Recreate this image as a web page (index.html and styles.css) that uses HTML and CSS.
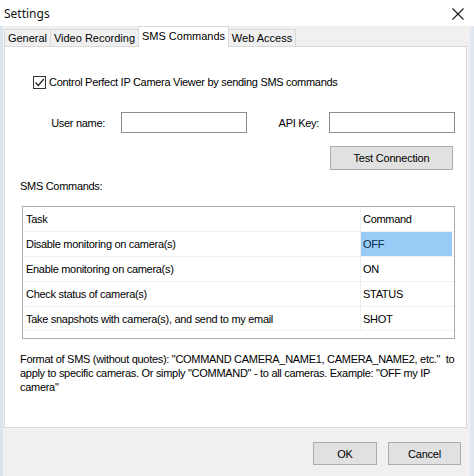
FILE: index.html
```html
<!DOCTYPE html>
<html>
<head>
<meta charset="utf-8">
<link rel="stylesheet" href="styles.css">
</head>
<body>
<div class="window">
  <div class="titlebar">
    <span class="title">Settings</span>
    <svg class="close" width="12" height="12" viewBox="0 0 12 12"><path d="M0.5 0.5 L11.5 11.5 M11.5 0.5 L0.5 11.5" stroke="#1a1a1a" stroke-width="1.1" fill="none"/></svg>
  </div>
  <div class="client">
    <div class="tabs">
      <div class="tab t-general">General</div>
      <div class="tab t-video">Video Recording</div>
      <div class="tab t-sms active">SMS Commands</div>
      <div class="tab t-web">Web Access</div>
    </div>
    <div class="panel">
      <div class="check-row">
        <span class="checkbox"><svg width="11" height="11" viewBox="0 0 11 11"><path d="M1.5 5.5 L4.3 8.5 L9.8 2" stroke="#222" stroke-width="1.2" fill="none"/></svg></span>
        <span class="check-label">Control Perfect IP Camera Viewer by sending SMS commands</span>
      </div>
      <div class="fields">
        <span class="lbl lbl-user">User name:</span>
        <span class="input"></span>
        <span class="lbl lbl-api">API Key:</span>
        <span class="input"></span>
      </div>
      <div class="test-row">
        <button class="btn btn-test">Test Connection</button>
      </div>
      <div class="section-label">SMS Commands:</div>
      <div class="grid">
        <div class="grow head"><div class="c-task">Task</div><div class="c-cmd">Command</div></div>
        <div class="grow"><div class="c-task">Disable monitoring on camera(s)</div><div class="c-cmd"><span class="sel">OFF</span></div></div>
        <div class="grow"><div class="c-task">Enable monitoring on camera(s)</div><div class="c-cmd">ON</div></div>
        <div class="grow"><div class="c-task">Check status of camera(s)</div><div class="c-cmd">STATUS</div></div>
        <div class="grow"><div class="c-task">Take snapshots with camera(s), and send to my email</div><div class="c-cmd">SHOT</div></div>
      </div>
      <p class="note">Format of SMS (without quotes): "COMMAND CAMERA_NAME1, CAMERA_NAME2, etc."&nbsp; to apply to specific cameras. Or simply "COMMAND" - to all cameras. Example: "OFF my IP camera"</p>
    </div>
    <div class="footer">
      <button class="btn btn-ok">OK</button>
      <button class="btn btn-cancel">Cancel</button>
    </div>
  </div>
</div>
</body>
</html>
```
FILE: styles.css
```css
* { box-sizing: border-box; }
html, body { margin: 0; padding: 0; }
body {
  width: 474px;
  height: 476px;
  overflow: hidden;
  font-family: "Liberation Sans", Arial, sans-serif;
  font-size: 11px;
  letter-spacing: -0.3px;
  color: #000;
  background: #f0f0f0;
}
.window {
  width: 474px;
  height: 476px;
  display: flex;
  flex-direction: column;
}
.titlebar {
  height: 26px;
  background: #fff;
  display: flex;
  align-items: center;
  justify-content: space-between;
  padding: 0 10px 0 4px;
}
.title {
  font-family: "Noto Sans", "Open Sans", sans-serif;
  font-size: 12px;
  letter-spacing: 0;
  color: #111;
}
.close { margin-top: 1px; }
.client {
  flex: 1;
  display: flex;
  flex-direction: column;
  background: #f0f0f0;
  border-left: 3px solid #dbe4ed;
  border-right: 4px solid #e1e8ef;
}
.tabs {
  height: 20px;
  display: flex;
  align-items: flex-end;
  padding-left: 1px;
}
.tab {
  height: 17px;
  border: 1px solid #d9d9d9;
  border-bottom: none;
  background: #f0f0f0;
  display: flex;
  align-items: center;
  justify-content: center;
  margin-left: -1px;
  line-height: 1;
  padding-top: 1px;
  letter-spacing: 0;
}
.tab:first-child { margin-left: 0; }
.t-general { width: 47px; }
.t-video { width: 89px; }
.t-sms { width: 91px; }
.t-web { width: 68px; }
.tab.active {
  height: 21px;
  background: #fff;
  margin-bottom: -1px;
  position: relative;
  z-index: 1;
  padding-top: 0;
  padding-bottom: 2px;
}
.panel {
  margin-left: 1px;
  width: 463px;
  height: 382px;
  background: #fff;
  border: 1px solid #d9d9d9;
  display: flex;
  flex-direction: column;
}
.check-row {
  margin-top: 28px;
  padding-left: 28px;
  display: flex;
  align-items: center;
  height: 14px;
}
.checkbox {
  width: 13px;
  height: 13px;
  border: 1px solid #333;
  display: flex;
  align-items: center;
  justify-content: center;
  margin-right: 3px;
}
.fields {
  margin-top: 23px;
  display: flex;
  align-items: center;
  height: 21px;
}
.lbl { text-align: right; }
.lbl-user { width: 100px; margin-right: 16px; }
.lbl-api { width: 72px; margin-right: 10px; }
.input {
  width: 126px;
  height: 21px;
  border: 1px solid #8e8e8e;
  background: #fff;
}
.test-row {
  margin-top: 13px;
  display: flex;
  padding-left: 325px;
}
.btn {
  font-family: "Liberation Sans", Arial, sans-serif;
  font-size: 11px;
  letter-spacing: -0.2px;
  color: #000;
  background: #e1e1e1;
  border: 1px solid #adadad;
  padding: 0;
  margin: 0;
  height: 24px;
}
.btn-test { width: 123px; }
.section-label {
  margin-top: 9px;
  padding-left: 15px;
  height: 14px;
  line-height: 14px;
}
.grid {
  margin-top: 13px;
  margin-left: 17px;
  width: 433px;
  height: 133px;
  border: 1px solid #acacac;
  display: flex;
  flex-direction: column;
}
.grow {
  height: 25px;
  display: flex;
  border-bottom: 1px solid #f0f0f0;
}
.grow:last-child { height: 24px; border-bottom: 1px solid #f4f4f4; }
.c-task {
  width: 338px;
  border-right: 1px solid #f0f0f0;
  padding-left: 3px;
  display: flex;
  align-items: center;
}
.c-cmd {
  flex: 1;
  padding-left: 2px;
  padding-right: 2px;
  display: flex;
  align-items: center;
}
.c-cmd .sel {
  align-self: stretch;
  flex: 1;
  margin-left: -2px;
  padding-left: 2px;
  background: #99cbf7;
  display: flex;
  align-items: center;
  color: #0b2a4a;
}
.note {
  margin: 13px 0 0 15px;
  width: 442px;
  line-height: 14px;
}
.footer {
  flex: 1;
  display: flex;
  justify-content: flex-end;
  align-items: flex-start;
  padding-top: 14px;
  padding-right: 9px;
  gap: 11px;
}
.btn-ok { width: 64px; height: 23px; }
.btn-cancel { width: 73px; height: 23px; }
```
